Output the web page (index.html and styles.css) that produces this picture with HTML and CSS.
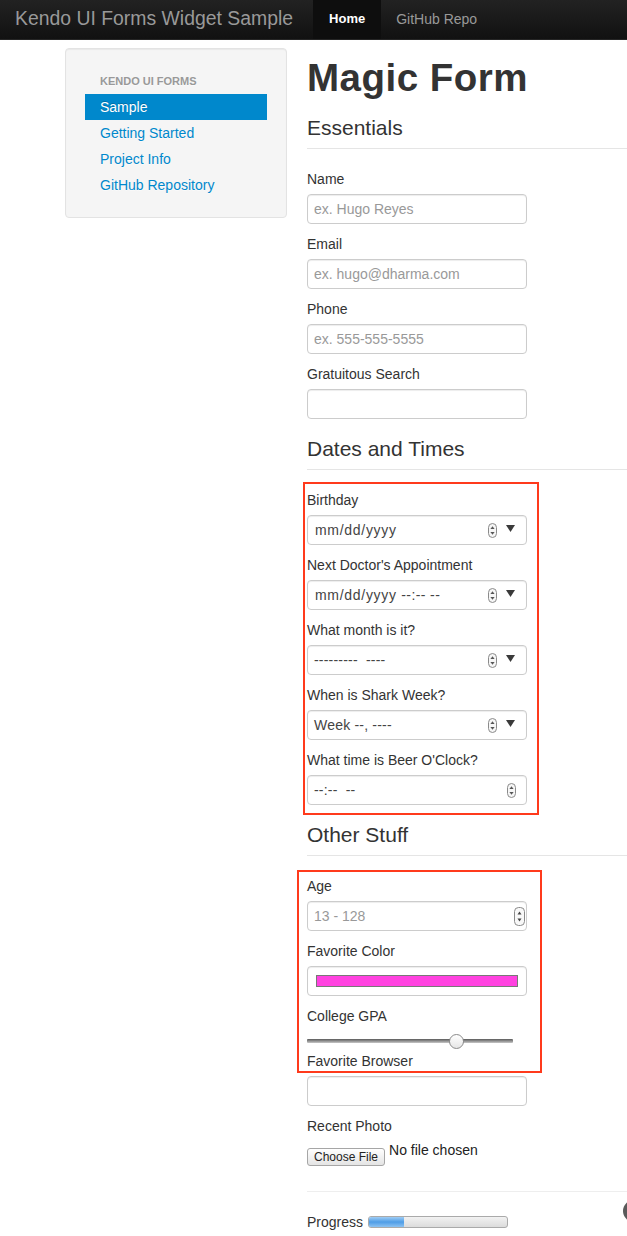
FILE: index.html
```html
<!DOCTYPE html>
<html lang="en">
<head>
<meta charset="utf-8">
<title>Kendo UI Forms Widget Sample</title>
<link rel="stylesheet" href="styles.css">
</head>
<body>
<header class="navbar">
  <a class="brand" href="#">Kendo UI Forms Widget Sample</a>
  <nav class="nav">
    <a class="nav-link active" href="#">Home</a>
    <a class="nav-link" href="#">GitHub Repo</a>
  </nav>
</header>

<div class="page">
  <aside class="well">
    <div class="nav-header">Kendo UI Forms</div>
    <a class="side-link active" href="#">Sample</a>
    <a class="side-link" href="#">Getting Started</a>
    <a class="side-link" href="#">Project Info</a>
    <a class="side-link" href="#">GitHub Repository</a>
  </aside>

  <main class="main">
    <h1 class="title">Magic Form</h1>

    <div class="legend">Essentials</div>
    <div class="field">
      <label class="label">Name</label>
      <input class="input" type="text" placeholder="ex. Hugo Reyes">
    </div>
    <div class="field">
      <label class="label">Email</label>
      <input class="input" type="text" placeholder="ex. hugo@dharma.com">
    </div>
    <div class="field">
      <label class="label">Phone</label>
      <input class="input" type="text" placeholder="ex. 555-555-5555">
    </div>
    <div class="field">
      <label class="label">Gratuitous Search</label>
      <input class="input" type="text">
    </div>

    <div class="legend">Dates and Times</div>
    <div class="redbox redbox-dates">
      <div class="field">
        <label class="label">Birthday</label>
        <div class="input fake">
          <span class="fake-text">mm/dd/yyyy</span>
          <svg class="spin" width="9" height="15" viewBox="0 0 9 15"><rect x="0.5" y="0.5" width="8" height="14" rx="4" fill="#f6f6f6" stroke="#8a8a8a"/><path d="M4.5 3.2 L6.6 6 L2.4 6 Z" fill="#555"/><path d="M4.5 11.8 L6.6 9 L2.4 9 Z" fill="#555"/></svg>
          <svg class="drop" width="9" height="7" viewBox="0 0 9 7"><path d="M0 0 H9 L4.5 7 Z" fill="#3a3a3a"/></svg>
        </div>
      </div>
      <div class="field">
        <label class="label">Next Doctor's Appointment</label>
        <div class="input fake">
          <span class="fake-text">mm/dd/yyyy <span class="tight">--:-- --</span></span>
          <svg class="spin" width="9" height="15" viewBox="0 0 9 15"><rect x="0.5" y="0.5" width="8" height="14" rx="4" fill="#f6f6f6" stroke="#8a8a8a"/><path d="M4.5 3.2 L6.6 6 L2.4 6 Z" fill="#555"/><path d="M4.5 11.8 L6.6 9 L2.4 9 Z" fill="#555"/></svg>
          <svg class="drop" width="9" height="7" viewBox="0 0 9 7"><path d="M0 0 H9 L4.5 7 Z" fill="#3a3a3a"/></svg>
        </div>
      </div>
      <div class="field">
        <label class="label">What month is it?</label>
        <div class="input fake">
          <span class="fake-text narrow">--------- &nbsp;----</span>
          <svg class="spin" width="9" height="15" viewBox="0 0 9 15"><rect x="0.5" y="0.5" width="8" height="14" rx="4" fill="#f6f6f6" stroke="#8a8a8a"/><path d="M4.5 3.2 L6.6 6 L2.4 6 Z" fill="#555"/><path d="M4.5 11.8 L6.6 9 L2.4 9 Z" fill="#555"/></svg>
          <svg class="drop" width="9" height="7" viewBox="0 0 9 7"><path d="M0 0 H9 L4.5 7 Z" fill="#3a3a3a"/></svg>
        </div>
      </div>
      <div class="field">
        <label class="label">When is Shark Week?</label>
        <div class="input fake">
          <span class="fake-text narrow">Week --, ----</span>
          <svg class="spin" width="9" height="15" viewBox="0 0 9 15"><rect x="0.5" y="0.5" width="8" height="14" rx="4" fill="#f6f6f6" stroke="#8a8a8a"/><path d="M4.5 3.2 L6.6 6 L2.4 6 Z" fill="#555"/><path d="M4.5 11.8 L6.6 9 L2.4 9 Z" fill="#555"/></svg>
          <svg class="drop" width="9" height="7" viewBox="0 0 9 7"><path d="M0 0 H9 L4.5 7 Z" fill="#3a3a3a"/></svg>
        </div>
      </div>
      <div class="field">
        <label class="label">What time is Beer O'Clock?</label>
        <div class="input fake fake-time">
          <span class="fake-text narrow">--:-- &nbsp;--</span>
          <svg class="spin" width="9" height="15" viewBox="0 0 9 15"><rect x="0.5" y="0.5" width="8" height="14" rx="4" fill="#f6f6f6" stroke="#8a8a8a"/><path d="M4.5 3.2 L6.6 6 L2.4 6 Z" fill="#555"/><path d="M4.5 11.8 L6.6 9 L2.4 9 Z" fill="#555"/></svg>
        </div>
      </div>
    </div>

    <div class="legend">Other Stuff</div>
    <div class="redbox redbox-other">
      <div class="field">
        <label class="label">Age</label>
        <div class="input fake fake-number">
          <span class="placeholder">13 - 128</span>
          <svg class="spin-num" width="11" height="19" viewBox="0 0 11 19"><rect x="0.5" y="0.5" width="10" height="18" rx="4" fill="#f8f8f8" stroke="#8a8a8a"/><path d="M5.5 4.5 L7.5 7.5 L3.5 7.5 Z" fill="#444"/><path d="M5.5 14.5 L7.5 11.5 L3.5 11.5 Z" fill="#444"/></svg>
        </div>
      </div>
      <div class="field">
        <label class="label">Favorite Color</label>
        <div class="input fake fake-color">
          <span class="swatch"></span>
        </div>
      </div>
      <div class="field">
        <label class="label">College GPA</label>
        <input class="range" type="range" min="0" max="100" step="0.1" value="74.6">
      </div>
      <label class="label label-last">Favorite Browser</label>
    </div>
    <input class="input" type="text">

    <div class="field">
      <label class="label">Recent Photo</label>
      <div class="file-row">
        <button class="file-btn" type="button">Choose File</button>
        <span class="file-text">No file chosen</span>
      </div>
    </div>

    <hr class="rule">

    <div class="progress-row">
      <span class="label-inline">Progress</span>
      <div class="progress"><div class="bar" style="width: 25%"></div></div>
      <span class="blob"></span>
    </div>
  </main>
</div>
</body>
</html>
```

FILE: styles.css
```css
html, body {
  margin: 0;
  padding: 0;
  overflow-x: hidden;
}

body {
  font-family: "Liberation Sans", Arial, sans-serif;
  font-size: 14px;
  line-height: 20px;
  color: #333;
  background: #fff;
}

a { text-decoration: none; }

/* Navbar */
.navbar {
  height: 39px;
  display: flex;
  align-items: stretch;
  background: linear-gradient(#222222, #111111);
  border-bottom: 1px solid #252525;
}

.brand {
  padding: 8px 20px 11px 15px;
  font-size: 19.4px;
  line-height: 20px;
  color: #999;
  font-weight: 200;
}

.nav {
  display: flex;
}

.nav-link {
  padding: 9px 15px 10px;
  font-size: 14px;
  line-height: 20px;
  color: #999;
}

.nav-link.active {
  color: #fff;
  font-weight: bold;
  font-size: 13px;
  padding: 9px 16px 10px;
  background: #0e0e0e;
}

/* Page */
.page {
  display: flex;
  align-items: flex-start;
  padding: 8px 0 0 65px;
}

.well {
  flex: none;
  width: 222px;
  box-sizing: border-box;
  padding: 19px;
  background: #f5f5f5;
  border: 1px solid #e3e3e3;
  border-radius: 4px;
  box-shadow: inset 0 1px 1px rgba(0, 0, 0, 0.05);
  display: flex;
  flex-direction: column;
}

.nav-header {
  padding: 3px 15px;
  font-size: 11px;
  font-weight: bold;
  line-height: 20px;
  color: #999;
  text-transform: uppercase;
  text-shadow: 0 1px 0 rgba(255, 255, 255, 0.5);
}

.side-link {
  display: block;
  padding: 3px 15px;
  color: #0088cc;
  line-height: 20px;
  text-shadow: 0 1px 0 rgba(255, 255, 255, 0.5);
}

.side-link.active {
  color: #fff;
  background: #0088cc;
  text-shadow: 0 -1px 0 rgba(0, 0, 0, 0.2);
}

.main {
  flex: 1;
  min-width: 0;
  margin-left: 20px;
  padding-bottom: 40px;
}

.title {
  margin: 10px 0;
  font-size: 38.5px;
  line-height: 40px;
  font-weight: bold;
  letter-spacing: 0.5px;
  color: #333;
}

.legend {
  font-size: 21px;
  line-height: 40px;
  color: #333;
  border-bottom: 1px solid #e5e5e5;
  margin-bottom: 20px;
}

.field {
  display: block;
}

.label {
  display: block;
  margin-bottom: 5px;
  line-height: 20px;
  font-size: 14px;
  color: #333;
}

.input {
  display: block;
  box-sizing: border-box;
  width: 220px;
  height: 30px;
  margin: 0 0 10px 0;
  padding: 4px 6px;
  font-family: "Liberation Sans", Arial, sans-serif;
  font-size: 14px;
  line-height: 20px;
  color: #555;
  background: #fff;
  border: 1px solid #ccc;
  border-radius: 4px;
  box-shadow: inset 0 1px 1px rgba(0, 0, 0, 0.075);
}

.input::placeholder {
  color: #999;
}

.fake {
  display: flex;
  align-items: center;
  padding: 0 11px 0 7px;
}

.fake-text {
  color: #444;
  font-size: 14px;
  letter-spacing: 0.7px;
  white-space: nowrap;
}

.fake-text .tight {
  letter-spacing: 0.4px;
}

.fake-text.narrow {
  letter-spacing: 0.2px;
  margin-left: -1px;
}

.spin {
  margin-left: auto;
  flex: none;
}

.drop {
  margin-left: 9px;
  margin-top: -3px;
  flex: none;
}

.fake-time {
  padding-right: 10px;
}

.fake-number {
  padding: 0 1px 0 6px;
}

.placeholder {
  color: #999;
}

.spin-num {
  margin-left: auto;
  flex: none;
}

.fake-color {
  padding: 0 8px;
}

.swatch {
  display: block;
  width: 202px;
  height: 12px;
  box-sizing: border-box;
  background: #ff42e0;
  border: 1px solid #777;
}

/* Red debug boxes */
.redbox {
  box-sizing: border-box;
  border: 2px solid #ff3a1c;
}

.redbox-dates {
  width: 236px;
  margin: -8px 0 0 -4px;
  padding: 6px 0 0 2px;
}

.redbox-dates > .field:last-child .input {
  margin-bottom: 8px;
}

.redbox-other {
  width: 245px;
  margin: -6px 0 3px -10px;
  padding: 4px 0 0 8px;
}

.label-last {
  margin-bottom: 0;
}

/* Range */
.range {
  -webkit-appearance: none;
  appearance: none;
  display: block;
  width: 206px;
  height: 20px;
  margin: 0;
  padding: 0;
  background: transparent;
}

.range::-webkit-slider-runnable-track {
  height: 4px;
  border-radius: 1px;
  background: linear-gradient(#5a5a5a, #9a9a9a 60%, #c8c8c8);
}

.range::-webkit-slider-thumb {
  -webkit-appearance: none;
  appearance: none;
  width: 15px;
  height: 15px;
  margin-top: -5.5px;
  border-radius: 50%;
  box-sizing: border-box;
  border: 1px solid #8a8a8a;
  background: linear-gradient(#ffffff, #e6e6e6);
}

/* File */
.file-row {
  display: flex;
  align-items: flex-start;
  height: 30px;
  gap: 4px;
}

.file-btn {
  margin-top: 7px;
  height: 18px;
  padding: 0 6px;
  font-family: "Liberation Sans", Arial, sans-serif;
  font-size: 12px;
  line-height: 16px;
  color: #222;
  background: linear-gradient(#ffffff, #e4e4e4);
  border: 1px solid #a6a6a6;
  border-radius: 3px;
}

.file-text {
  line-height: 16px;
  margin-top: 1px;
  font-size: 14px;
  color: #222;
}

.rule {
  margin: 20px 0;
  border: 0;
  border-top: 1px solid #eee;
  height: 0;
}

/* Progress */
.progress-row {
  display: flex;
  align-items: center;
  gap: 5px;
  height: 20px;
  margin-top: 1px;
}

.label-inline {
  color: #333;
}

.progress {
  width: 140px;
  height: 12px;
  box-sizing: border-box;
  border: 1px solid #aaa;
  border-radius: 3px;
  background: linear-gradient(#f2f2f2, #dcdcdc);
  overflow: hidden;
}

.bar {
  height: 100%;
  background: linear-gradient(#9fcdf5, #4f9de6 50%, #8cc2f2);
}

.blob {
  margin-left: auto;
  margin-right: -18px;
  margin-top: -22px;
  width: 22px;
  height: 22px;
  flex: none;
  border-radius: 50%;
  background: #5a5a5a;
}
```
